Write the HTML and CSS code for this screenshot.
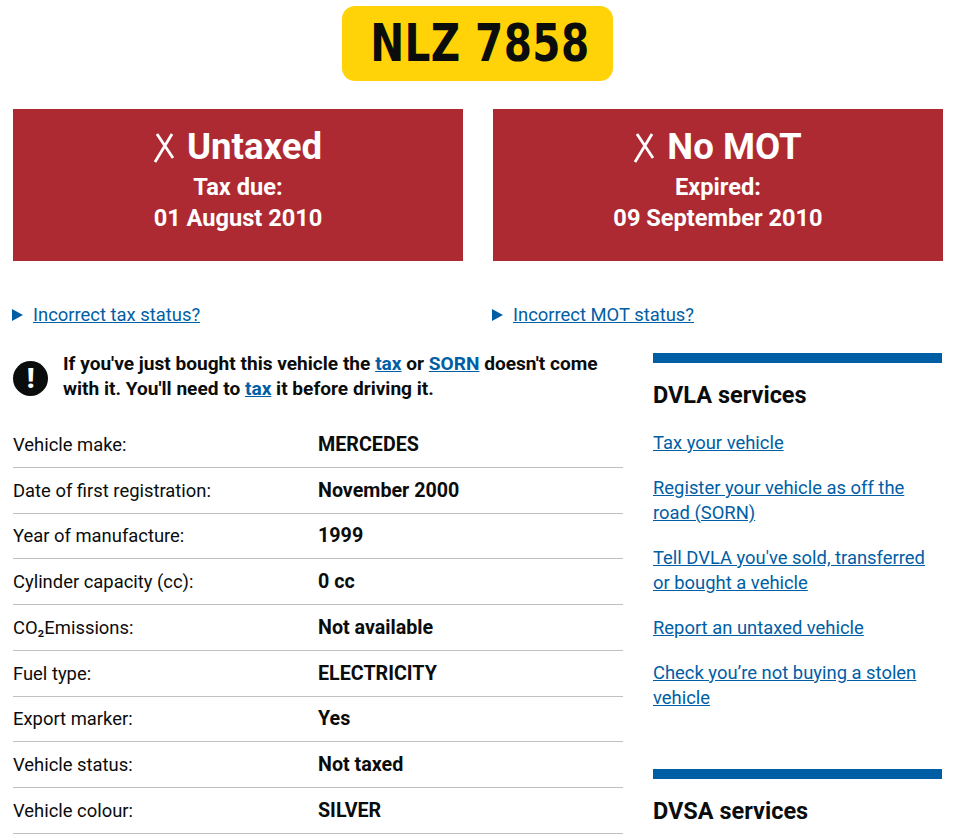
FILE: index.html
```html
<!DOCTYPE html>
<html lang="en">
<head>
<meta charset="utf-8">
<title>Vehicle details</title>
<link rel="stylesheet" href="styles.css">
</head>
<body>
<div class="plate-wrap"><div class="plate"><span class="plate-text">NLZ 7858</span></div></div>
<div class="status-grid">
  <div class="status">
    <h2 class="status-title"><svg class="cross" viewBox="0 0 21 31" aria-hidden="true"><path d="M3 2 L19 26 M18 2 L1 30" fill="none" stroke="#fff" stroke-width="2.800"/></svg>Untaxed</h2>
    <p class="status-line">Tax due:</p>
    <p class="status-line">01 August 2010</p>
  </div>
  <div class="status">
    <h2 class="status-title"><svg class="cross" viewBox="0 0 21 31" aria-hidden="true"><path d="M3 2 L19 26 M18 2 L1 30" fill="none" stroke="#fff" stroke-width="2.800"/></svg>No MOT</h2>
    <p class="status-line">Expired:</p>
    <p class="status-line">09 September 2010</p>
  </div>
</div>
<div class="details-grid">
  <div class="detail"><span class="arrow"></span><a href="#">Incorrect tax status?</a></div>
  <div class="detail"><span class="arrow"></span><a href="#">Incorrect MOT status?</a></div>
</div>
<div class="columns">
  <main class="main">
    <div class="warning">
      <span class="warn-icon">!</span>
      <p class="warn-text">If you've just bought this vehicle the <a href="#">tax</a> or <a href="#">SORN</a> doesn't come with it. You'll need to <a href="#">tax</a> it before driving it.</p>
    </div>
    <dl class="facts">
      <div class="row"><dt>Vehicle make:</dt><dd>MERCEDES</dd></div>
      <div class="row"><dt>Date of first registration:</dt><dd>November 2000</dd></div>
      <div class="row"><dt>Year of manufacture:</dt><dd>1999</dd></div>
      <div class="row"><dt>Cylinder capacity (cc):</dt><dd>0 cc</dd></div>
      <div class="row"><dt>CO₂Emissions:</dt><dd>Not available</dd></div>
      <div class="row"><dt>Fuel type:</dt><dd>ELECTRICITY</dd></div>
      <div class="row"><dt>Export marker:</dt><dd>Yes</dd></div>
      <div class="row"><dt>Vehicle status:</dt><dd>Not taxed</dd></div>
      <div class="row"><dt>Vehicle colour:</dt><dd>SILVER</dd></div>
    </dl>
  </main>
  <aside class="side">
    <section class="panel">
      <h3 class="panel-title">DVLA services</h3>
      <p class="panel-link"><a href="#">Tax your vehicle</a></p>
      <p class="panel-link"><a href="#">Register your vehicle as off the road (SORN)</a></p>
      <p class="panel-link"><a href="#">Tell DVLA you've sold, transferred or bought a vehicle</a></p>
      <p class="panel-link"><a href="#">Report an untaxed vehicle</a></p>
      <p class="panel-link"><a href="#">Check you’re not buying a stolen vehicle</a></p>
    </section>
    <section class="panel">
      <h3 class="panel-title">DVSA services</h3>
    </section>
  </aside>
</div>
</body>
</html>
```
FILE: styles.css
```css
html, body { margin: 0; padding: 0; background: #fff; overflow: hidden; height: 840px; }
body { font-family: "Roboto", "Liberation Sans", sans-serif; color: #0b0c0c; font-size: 18.4px; padding: 6px 11px 0 13px; box-sizing: border-box; }
p, h2, h3, dl, dd, dt { margin: 0; }
a { color: #005ea5; text-decoration: underline; }
.plate-wrap { display: flex; justify-content: center; margin-left: -1px; }
.plate { width: 271px; height: 75px; background: #ffd307; border-radius: 13px; display: flex; align-items: center; justify-content: center; }
.plate-text { font-family: "DejaVu Sans", sans-serif; font-weight: 700; font-size: 52px; line-height: 75px; color: #0b0c0c; white-space: pre; letter-spacing: 0.5px; padding-left: 7px; transform: scaleX(0.78); }
.status-grid { display: grid; grid-template-columns: 450px 450px; column-gap: 30px; margin-top: 28px; }
.status { height: 152px; background: #ae2a33; color: #fff; text-align: center; box-sizing: border-box; padding-top: 20px; }
.status-title { font-size: 36.6px; font-weight: 700; line-height: 36px; display: flex; justify-content: center; align-items: center; gap: 12px; }
.cross { width: 21px; height: 31px; }
.status-line { font-size: 23.6px; font-weight: 700; line-height: 31px; }
.status-title + .status-line { margin-top: 7px; }
.details-grid { display: grid; grid-template-columns: 450px 450px; column-gap: 30px; margin-top: 42px; }
.detail { display: flex; align-items: center; gap: 10px; line-height: 24px; }
.arrow { width: 0; height: 0; margin-left: -1px; border-left: 11px solid #005ea5; border-top: 6.5px solid transparent; border-bottom: 6.5px solid transparent; }
.columns { display: grid; grid-template-columns: 610px 289px; column-gap: 30px; margin-top: 24px; }
.warning { display: flex; align-items: center; gap: 15px; }
.warn-icon { width: 35px; height: 35px; border-radius: 50%; background: #0b0c0c; color: #fff; display: flex; align-items: center; justify-content: center; font-weight: 900; font-size: 28px; flex: none; }
.warn-text { font-weight: 700; font-size: 19.1px; line-height: 25px; padding-bottom: 4px; }
.facts { margin-top: 17px; }
.row { display: grid; grid-template-columns: 305px 1fr; height: 45.75px; box-sizing: border-box; border-bottom: 1px solid #bfc1c3; align-items: center; }
dt { font-weight: 400; }
dd { font-weight: 700; font-size: 19.7px; }
.side { margin-top: 2px; }
.panel { border-top: 10px solid #005ea5; }
.panel + .panel { margin-top: 59px; }
.panel-title { font-size: 23.500px; font-weight: 700; line-height: 30px; margin-top: 17px; }
.panel-link { line-height: 25px; margin-top: 20px; }
```
